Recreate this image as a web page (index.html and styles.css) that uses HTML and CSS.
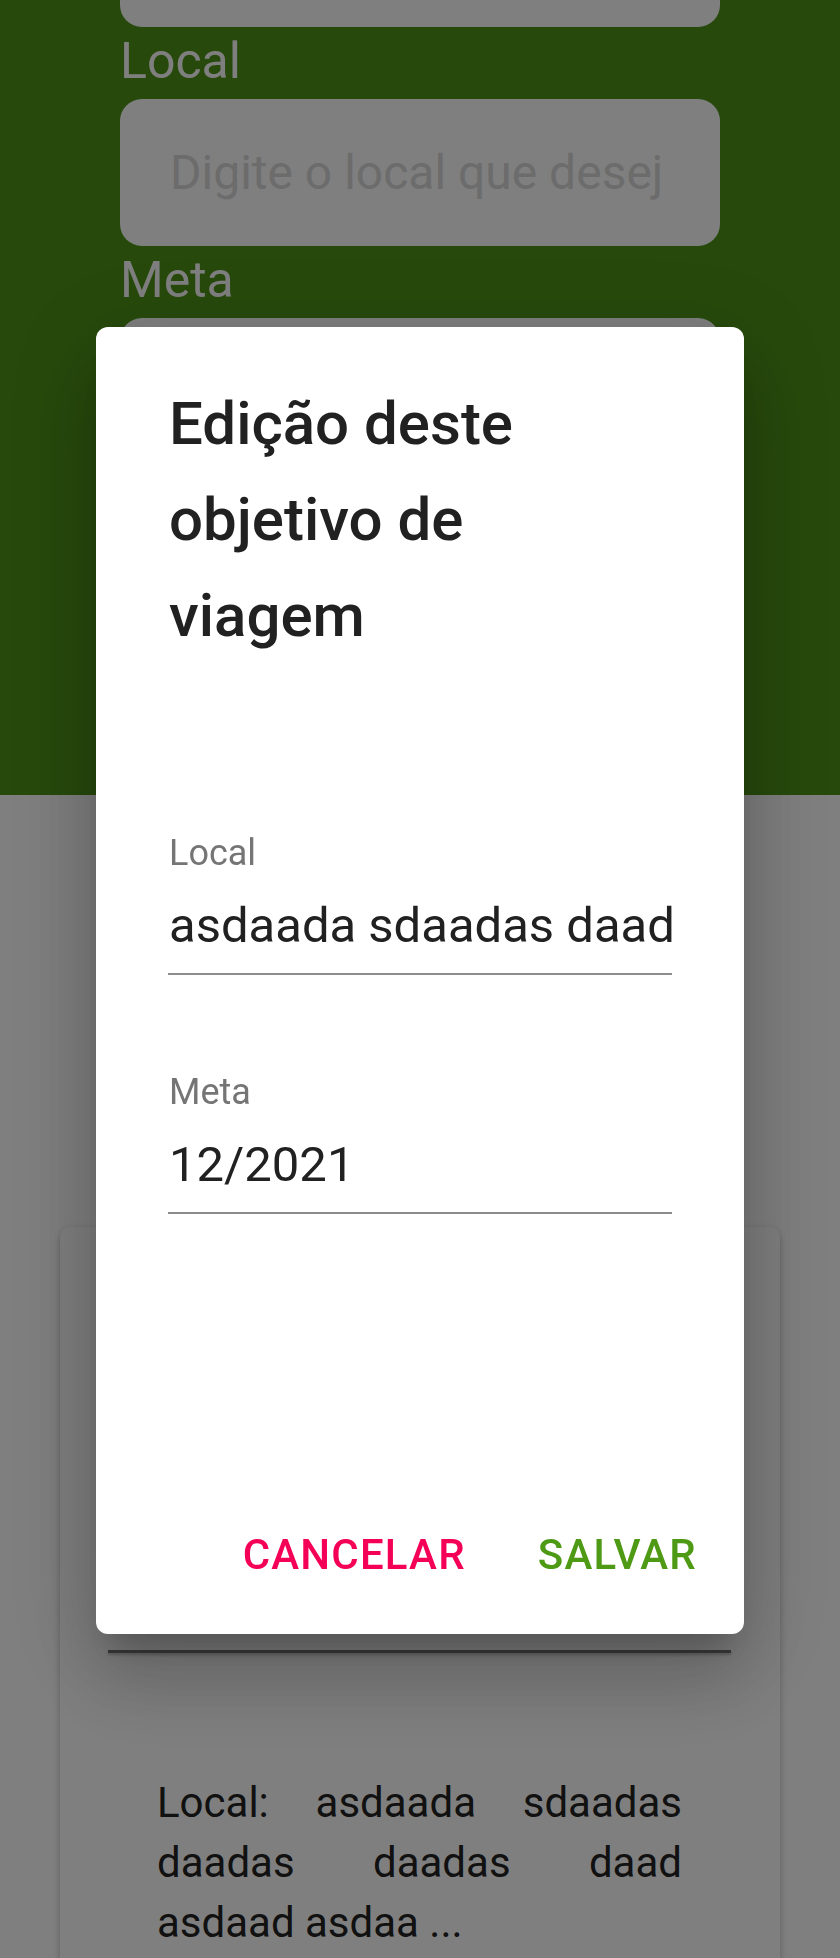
FILE: index.html
```html
<!DOCTYPE html>
<html lang="pt-BR">
<head>
<meta charset="utf-8">
<title>Edição deste objetivo de viagem</title>
<link rel="stylesheet" href="styles.css">
</head>
<body>
<div class="screen">
  <section class="hero">
    <div class="form">
      <div class="box box-cut"></div>
      <div class="form-label">Local</div>
      <div class="box box-input"><span class="placeholder">Digite o local que desej</span></div>
      <div class="form-label">Meta</div>
      <div class="box box-input"></div>
    </div>
  </section>
  <section class="content">
    <article class="card">
      <div class="card-rule"></div>
      <p class="card-text">Local: asdaada sdaadas daadas daadas daad asdaad asdaa ...</p>
    </article>
  </section>
</div>

<div class="backdrop">
  <div class="dialog" role="dialog" aria-labelledby="dlg-title">
    <h2 class="dialog-title" id="dlg-title">Edição deste objetivo de viagem</h2>
    <div class="field field-first">
      <div class="field-label">Local</div>
      <div class="field-value">asdaada sdaadas daad</div>
    </div>
    <div class="field">
      <div class="field-label">Meta</div>
      <div class="field-value">12/2021</div>
    </div>
    <div class="actions">
      <button class="btn btn-cancel" type="button">Cancelar</button>
      <button class="btn btn-save" type="button">Salvar</button>
    </div>
  </div>
</div>
</body>
</html>
```

FILE: styles.css
```css
* { box-sizing: border-box; }

html, body {
  margin: 0;
  padding: 0;
}

body {
  width: 840px;
  height: 1958px;
  overflow: hidden;
  font-family: Roboto, "Noto Sans", "Liberation Sans", sans-serif;
  background: #ffffff;
  color: #212121;
}

.screen {
  display: flex;
  flex-direction: column;
  height: 1958px;
}

/* green header with the form */
.hero {
  height: 795px;
  background: #4e9418;
  flex: none;
}

.form {
  width: 600px;
  margin-left: 120px;
  display: flex;
  flex-direction: column;
}

.box {
  background: #ffffff;
  border-radius: 22px;
}

.box-cut {
  height: 27px;
  border-radius: 0 0 22px 22px;
}

.box-input {
  height: 147px;
  display: flex;
  align-items: center;
  padding: 0 50px;
  overflow: hidden;
}

.placeholder {
  font-size: 48px;
  line-height: 60px;
  color: #d8d8d8;
  white-space: nowrap;
  overflow: hidden;
}

.form-label {
  font-size: 50px;
  line-height: 60px;
  color: #ffffff;
  margin: 4px 0 8px;
}

/* lower content */
.content {
  flex: 1;
  background: #ffffff;
  padding-top: 432px;
}

.card {
  margin-left: 60px;
  width: 720px;
  height: 760px;
  background: #ffffff;
  border-radius: 10px;
  box-shadow: 0 4px 2px -2px rgba(0,0,0,0.2), 0 4px 6px 0 rgba(0,0,0,0.14), 0 2px 10px 0 rgba(0,0,0,0.12);
  padding: 423px 49px 0 48px;
}

.card-rule {
  height: 3px;
  background: #757575;
  box-shadow: 0 2px 3px rgba(0,0,0,0.25);
}

.card-text {
  margin: 120px 0 0;
  padding: 0 49px;
  font-size: 42px;
  line-height: 60px;
  text-align: justify;
  color: #222222;
}

/* modal */
.backdrop {
  position: fixed;
  inset: 0;
  background: rgba(0, 0, 0, 0.5);
  display: flex;
  align-items: center;
  justify-content: center;
}

.dialog {
  width: 648px;
  height: 1307px;
  margin-top: 3px;
  background: #ffffff;
  border-radius: 12px;
  box-shadow: 0 22px 30px -14px rgba(0,0,0,0.2), 0 48px 76px 6px rgba(0,0,0,0.14), 0 18px 92px 16px rgba(0,0,0,0.12);
  display: flex;
  flex-direction: column;
  padding: 49px 73px 55px 73px;
}

.dialog-title {
  margin: 0;
  font-size: 60px;
  line-height: 96px;
  font-weight: 500;
  color: #212121;
}

.field {
  border-bottom: 2px solid #8c8c8c;
  width: 504px;
  margin-left: -1px;
  padding-left: 1px;
  margin-top: 95px;
}

.field-first {
  margin-top: 167px;
}

.field-label {
  font-size: 36px;
  line-height: 44px;
  color: #757575;
}

.field-value {
  margin-top: 21px;
  padding-bottom: 17px;
  font-size: 49px;
  line-height: 60px;
  color: #212121;
  white-space: nowrap;
}

.actions {
  margin-top: auto;
  display: flex;
  justify-content: flex-end;
  gap: 72px;
  margin-right: -26px;
}

.btn {
  border: 0;
  background: transparent;
  padding: 0;
  font-family: inherit;
  font-size: 42px;
  line-height: 48px;
  font-weight: 500;
  letter-spacing: 1.2px;
  text-transform: uppercase;
}

.btn-cancel { color: #f50057; }
.btn-save { color: #4e9a15; }
```
